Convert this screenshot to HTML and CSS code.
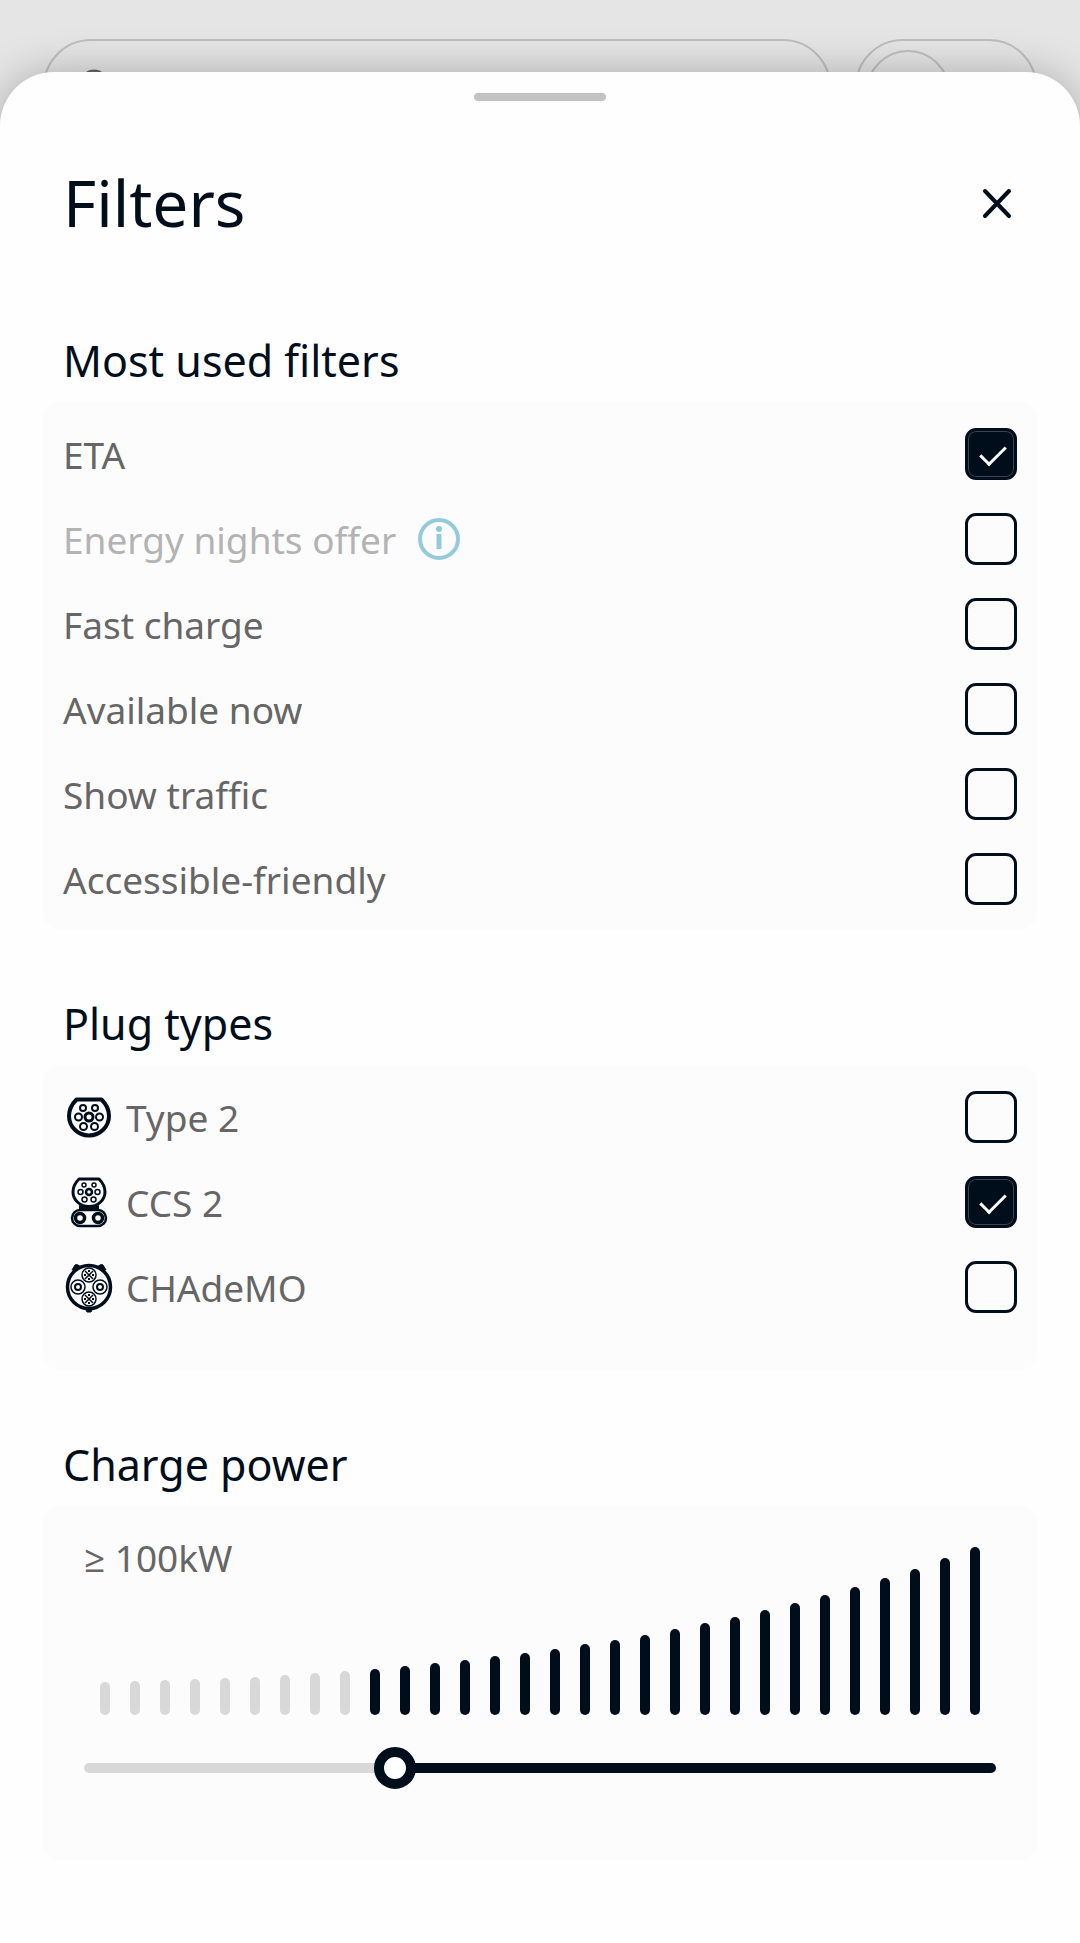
FILE: index.html
```html
<!DOCTYPE html>
<html lang="en">
<head>
<meta charset="UTF-8" />
<meta name="viewport" content="width=device-width, initial-scale=1" />
<title>Filters</title>
<link rel="stylesheet" href="styles.css">
</head>
<body>

<!-- search bar left behind the sheet -->
<div class="topbar" aria-hidden="true">
  <div class="search">
    <svg width="36" height="36" viewBox="0 0 36 36" fill="none" stroke="#666" stroke-width="3"><circle cx="15" cy="15" r="13"/><path d="M25 25l9 9"/></svg>
  </div>
  <div class="toggle"><span class="toggle-knob"></span></div>
</div>

<main class="sheet">
  <div class="handle"></div>

  <header class="sheet-header">
    <h1>Filters</h1>
    <button type="button" class="close" aria-label="Close">
      <svg width="40" height="40" viewBox="0 0 40 40" fill="none" stroke="currentColor" stroke-width="4" stroke-linecap="round"><path d="M8 8l24 25M32 8L8 33"/></svg>
    </button>
  </header>

  <section>
    <h2>Most used filters</h2>
    <div class="card options">
      <div class="option"><label for="eta">ETA</label><input type="checkbox" id="eta" checked></div>
      <div class="option disabled">
        <label for="nights">Energy nights offer</label>
        <button type="button" class="info" aria-label="About energy nights offer">
          <svg width="42" height="42" viewBox="0 0 42 42"><circle cx="21" cy="21" r="19" fill="none" stroke="currentColor" stroke-width="4"/><circle cx="21" cy="11" r="3" fill="currentColor"/><path d="M21 16v15" stroke="currentColor" stroke-width="5"/></svg>
        </button>
        <input type="checkbox" id="nights" disabled>
      </div>
      <div class="option"><label for="fast">Fast charge</label><input type="checkbox" id="fast"></div>
      <div class="option"><label for="available">Available now</label><input type="checkbox" id="available"></div>
      <div class="option"><label for="traffic">Show traffic</label><input type="checkbox" id="traffic"></div>
      <div class="option"><label for="accessible">Accessible-friendly</label><input type="checkbox" id="accessible"></div>
    </div>
  </section>

  <section>
    <h2>Plug types</h2>
    <div class="card options plugs">
      <div class="option">
        <svg class="plug" viewBox="0 0 52 52" fill="none" stroke="#000e1c">
          <path d="M13.500 8.500h25C43 13 46 19 46 25a20 19.500 0 0 1-40 0c0-6 3-12 7.500-16.500z" stroke-width="4" stroke-linejoin="round"/>
          <g stroke-width="2"><circle cx="20" cy="17" r="3"/><circle cx="32" cy="17" r="3"/><circle cx="15.500" cy="26" r="3.500"/><circle cx="36.500" cy="26" r="3.500"/><circle cx="20.500" cy="35.500" r="3.500"/><circle cx="31.500" cy="35.500" r="3.500"/></g>
          <circle cx="26" cy="26" r="4" stroke-width="3"/>
        </svg>
        <label for="type2">Type 2</label><input type="checkbox" id="type2">
      </div>
      <div class="option">
        <svg class="plug" viewBox="0 0 52 52" fill="none" stroke="#000e1c">
          <path d="M16 3h20c4 4 6 8 6 13a16 14.500 0 0 1-32 0c0-5 2-9 6-13z" stroke-width="3" stroke-linejoin="round"/>
          <g stroke-width="1.500"><circle cx="21" cy="9" r="2"/><circle cx="31" cy="9" r="2"/><circle cx="17.500" cy="16" r="2.500"/><circle cx="34.500" cy="16" r="2.500"/><circle cx="21.500" cy="23.500" r="2.500"/><circle cx="30.500" cy="23.500" r="2.500"/></g>
          <circle cx="26" cy="16" r="3" stroke-width="2.500"/>
          <path d="M16 29q10 4 20 0v5H16z" fill="#000e1c" stroke="none"/>
          <rect x="9" y="34" width="34" height="16" rx="8" stroke-width="2.500"/>
          <circle cx="17" cy="42" r="4.500" stroke-width="3.500"/><circle cx="35" cy="42" r="4.500" stroke-width="3.500"/>
        </svg>
        <label for="ccs2">CCS 2</label><input type="checkbox" id="ccs2" checked>
      </div>
      <div class="option">
        <svg class="plug" viewBox="0 0 52 52" fill="none" stroke="#000e1c">
          <circle cx="26" cy="26" r="21.500" stroke-width="3.500"/>
          <path d="M9 9l3-5q1-1 3 0l3 2zM43 9l-3-5q-1-1-3 0l-3 2zM22 47h8l-2 4h-4z" fill="#000e1c" stroke="#000e1c"/>
          <g stroke-width="1.500"><circle cx="26" cy="14" r="7"/><circle cx="26" cy="38" r="7"/><circle cx="15" cy="26" r="7"/><circle cx="37" cy="26" r="7"/></g>
          <g stroke-width="2"><circle cx="15" cy="26" r="3"/><circle cx="37" cy="26" r="3"/></g>
          <path d="M22 10l8 8M30 10l-8 8M22 34l8 8M30 34l-8 8" stroke-width="1.500"/>
          <path d="M26 9v2M26 17v2M21 14h2M29 14h2M26 33v2M26 41v2M21 38h2M29 38h2" stroke-width="2"/>
        </svg>
        <label for="chademo">CHAdeMO</label><input type="checkbox" id="chademo">
      </div>
    </div>
  </section>

  <section>
    <h2>Charge power</h2>
    <div class="card power">
      <label class="power-value" for="power">≥ 100kW</label>
      <div class="bars" aria-hidden="true">
        <i class="off" style="height:33px"></i>
        <i class="off" style="height:34px"></i>
        <i class="off" style="height:35px"></i>
        <i class="off" style="height:36px"></i>
        <i class="off" style="height:37px"></i>
        <i class="off" style="height:38px"></i>
        <i class="off" style="height:40px"></i>
        <i class="off" style="height:42px"></i>
        <i class="off" style="height:44px"></i>
        <i style="height:46px"></i>
        <i style="height:49px"></i>
        <i style="height:52px"></i>
        <i style="height:55px"></i>
        <i style="height:59px"></i>
        <i style="height:62px"></i>
        <i style="height:66px"></i>
        <i style="height:71px"></i>
        <i style="height:75px"></i>
        <i style="height:80px"></i>
        <i style="height:86px"></i>
        <i style="height:92px"></i>
        <i style="height:98px"></i>
        <i style="height:105px"></i>
        <i style="height:112px"></i>
        <i style="height:120px"></i>
        <i style="height:128px"></i>
        <i style="height:137px"></i>
        <i style="height:146px"></i>
        <i style="height:157px"></i>
        <i style="height:168px"></i>
      </div>
      <input type="range" id="power" min="0" max="300" value="100">
    </div>
  </section>
</main>

</body>
</html>
```
FILE: styles.css
```css
* {
  box-sizing: border-box;
}
body {
  display: flex;
  flex-direction: column;
  min-height: 100vh;
  margin: 0;
  font-family: "Noto Sans", "Open Sans", sans-serif;
  font-size: 37px;
  line-height: 44px;
  background-color: #e5e5e5;
  color: #666;
}
h1, h2 {
  margin: 0;
  color: #000e1c;
  font-weight: 400;
}
button {
  display: flex;
  padding: 0;
  border: 0;
  background: none;
}

/* behind the sheet */
.topbar {
  display: flex;
  gap: 24px;
  padding: 39px 43px 0;
}
.search, .toggle {
  height: 97px;
  border: 2px solid #bebebe;
  border-radius: 48px;
}
.search {
  flex: 1;
  padding: 28px 34px;
}
.toggle {
  width: 182px;
  padding: 9px;
}
.toggle-knob {
  display: block;
  width: 84px;
  height: 84px;
  border: 2px solid #bebebe;
  border-radius: 50%;
}

/* sheet */
.sheet {
  position: relative;
  flex: 1;
  margin-top: -64px;
  padding: 21px 43px 80px;
  border-radius: 54px 54px 0 0;
  background-color: #fefefe;
  box-shadow: 0 0 40px rgba(0, 0, 0, 0.25);
}
.handle {
  width: 132px;
  height: 8px;
  margin: 0 auto 66px;
  border-radius: 4px;
  background-color: #c3c3c3;
}
.sheet-header {
  display: flex;
  align-items: center;
  justify-content: space-between;
  margin-bottom: 97px;
  padding: 0 20px;
}
h1 {
  font-size: 64px;
  line-height: 72px;
}
h2 {
  margin-bottom: 16px;
  padding: 0 20px;
  font-size: 43px;
  line-height: 50px;
}
.close {
  color: #000e1c;
}
section + section {
  margin-top: 70px;
}
.card {
  border-radius: 16px;
  background-color: #fcfcfc;
}

/* check lists */
.options {
  display: flex;
  flex-direction: column;
  gap: 33px;
  padding: 26px 20px 24px;
}
.plugs {
  padding-bottom: 57px;
}
.option {
  display: flex;
  align-items: center;
}
.option label {
  padding-top: 2px;
}
.disabled {
  color: #b3b3b3;
}
.info {
  margin-left: 22px;
  color: #93cbdd;
}
.plug {
  width: 52px;
  height: 52px;
  margin-right: 11px;
}
input[type="checkbox"] {
  appearance: none;
  display: grid;
  place-items: center;
  width: 52px;
  height: 52px;
  margin: 0 0 0 auto;
  border: 3px solid #000e1c;
  border-radius: 11px;
}
input[type="checkbox"]:checked {
  background-color: #000e1c;
  box-shadow: inset 0 0 0 1px #3b4550;
}
input[type="checkbox"]:checked::before {
  content: "";
  width: 11px;
  height: 22px;
  margin: 0 0 4px 4px;
  border: solid #fff;
  border-width: 0 3px 3px 0;
  transform: rotate(45deg);
}

/* charge power */
.power {
  display: grid;
  padding: 30px 41px 71px;
}
.power-value {
  grid-area: 1 / 1;
}
.bars {
  grid-area: 1 / 1;
  display: flex;
  align-items: flex-end;
  justify-content: space-between;
  padding: 11px 16px 0;
}
.bars i {
  width: 10px;
  border-radius: 5px;
  background-color: #000e1c;
}
.bars .off {
  background-color: #d8d8d8;
}
input[type="range"] {
  appearance: none;
  width: 100%;
  height: 42px;
  margin: 32px 0 0;
  background: none;
}
input[type="range"]::-webkit-slider-runnable-track {
  height: 10px;
  border-radius: 5px;
  background: linear-gradient(to right, #d8d8d8 34%, #000e1c 34%);
}
input[type="range"]::-webkit-slider-thumb {
  appearance: none;
  width: 42px;
  height: 42px;
  margin-top: -16px;
  border: 10px solid #000e1c;
  border-radius: 50%;
  background-color: #fff;
}
```
